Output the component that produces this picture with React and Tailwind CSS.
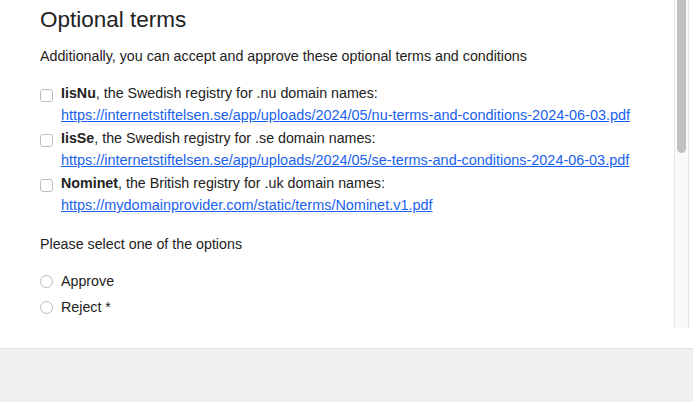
const terms = [
  {
    name: 'IisNu',
    text: ', the Swedish registry for .nu domain names:',
    url: 'https://internetstiftelsen.se/app/uploads/2024/05/nu-terms-and-conditions-2024-06-03.pdf',
  },
  {
    name: 'IisSe',
    text: ', the Swedish registry for .se domain names:',
    url: 'https://internetstiftelsen.se/app/uploads/2024/05/se-terms-and-conditions-2024-06-03.pdf',
  },
  {
    name: 'Nominet',
    text: ', the British registry for .uk domain names:',
    url: 'https://mydomainprovider.com/static/terms/Nominet.v1.pdf',
  },
]

function Checkbox() {
  return <span className="mt-[7px] block w-[13px] h-[13px] shrink-0 rounded-[3px] border border-[#bdbdbd] bg-white" />
}

function Radio() {
  return <span className="block w-[13px] h-[13px] shrink-0 rounded-full border border-[#bdbdbd] bg-white" />
}

export default function App() {
  return (
    <div className="w-[693px] h-[402px] bg-[#f0f0f0] overflow-hidden text-[#222] font-['Liberation_Sans',Arial,sans-serif]">
      <div className="h-[349px] bg-white border-b border-[#e2e2e2] flex pr-[4px]">
        <div className="flex-1 pl-[40px] pt-[6px]">
          <h2 className="text-[22.5px] leading-[28px] text-[#222]">Optional terms</h2>
          <p className="mt-[12px] text-[14.25px] leading-[20px]">
            Additionally, you can accept and approve these optional terms and conditions
          </p>

          {/* Terms */}
          <div className="mt-[16px] flex flex-col gap-[1px]">
            {terms.map(t => (
              <label key={t.name} className="flex items-start gap-[8px] text-[14.25px] leading-[22px]">
                <Checkbox />
                <span>
                  <span className="block">
                    <b className="font-bold">{t.name}</b>{t.text}
                  </span>
                  <a href="#" className="block text-[14.45px] text-[#1a62ee] underline">{t.url}</a>
                </span>
              </label>
            ))}
          </div>

          <p className="mt-[18px] text-[14.25px] leading-[20px]">Please select one of the options</p>

          {/* Options */}
          <div className="mt-[16px] flex flex-col gap-[4px]">
            {['Approve', 'Reject *'].map(label => (
              <label key={label} className="flex items-center gap-[8px] text-[14.25px] leading-[22px]">
                <Radio />
                <span>{label}</span>
              </label>
            ))}
          </div>
        </div>

        {/* Scrollbar */}
        <div className="w-[15px] h-[328px] bg-[#fafafa] border-x border-[#e6e6e6] px-[2px]">
          <div className="h-[153px] bg-[#c1c1c1] rounded-b-full" />
        </div>
      </div>
    </div>
  )
}
